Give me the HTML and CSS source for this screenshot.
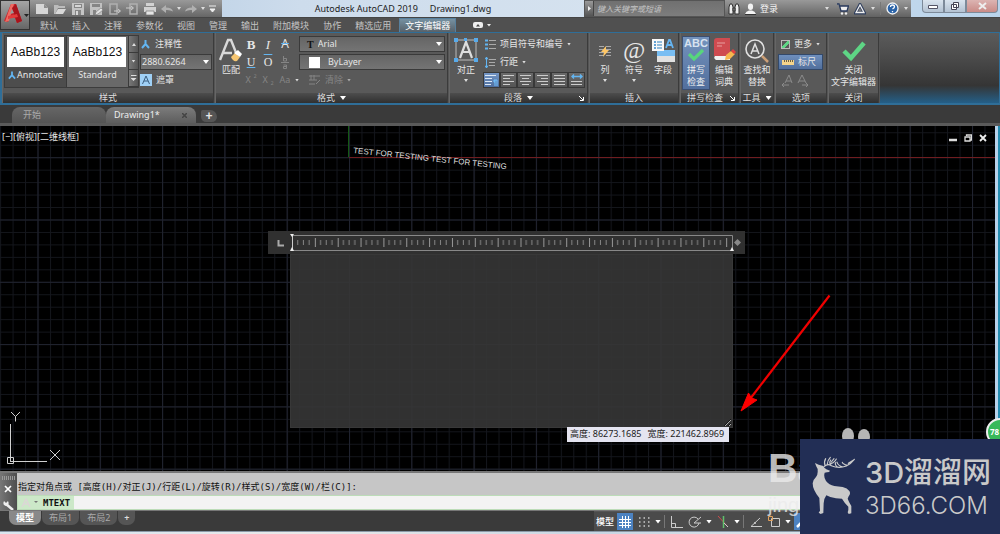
FILE: index.html
```html
<!DOCTYPE html>
<html lang="zh-CN">
<head>
<meta charset="utf-8">
<meta name="viewport" content="width=device-width, initial-scale=1">
<title>Autodesk AutoCAD 2019 - Drawing1.dwg</title>
<link rel="stylesheet" href="styles.css">
</head>
<body>
<div class="app">
  <button class="app-menu" aria-label="应用程序菜单">
    <svg width="30" height="30" viewBox="0 0 30 30"><path d="M3 20L10 3h5l6 17-5 2-2-5-5-1-2 5z" fill="#c9252c"/><path d="M10 3h3L8 20l-4 1z" fill="#ef6b62"/><path d="M15 3l6 17-5 2-5-15z" fill="#a8141c"/><path d="M7 15l9-2 1 3-10 2z" fill="#e23c3c"/><path d="M11 8l-2 5 4-1z" fill="#9a9a9a"/><path d="M23 13h5l-2.500 3z" fill="#222"/></svg>
  </button>

  <header class="titlebar">
    <div class="quick">
      <button aria-label="新建"><svg width="14" height="12" viewBox="0 0 14 12"><path d="M1 1h8l4 4v6H1z" fill="#d6d6d6"/><path d="M9 1v4h4" fill="#8d8d8d"/></svg></button>
      <button aria-label="打开"><svg width="14" height="12" viewBox="0 0 14 12"><path d="M1 11V2h4l1 1h6v2H5l-3 6z" fill="#bcbcbc"/><path d="M5 6h8l-3 5H2z" fill="#d8d8d8"/></svg></button>
      <button aria-label="保存"><svg width="14" height="12" viewBox="0 0 14 12"><path d="M1 0h12v12H1z" fill="#c4c4c4"/><path d="M3 1h8v4H3zM4 7h6v5H4z" fill="#858585"/><path d="M4 2h6v2H4zM5 8h2v4H5z" fill="#d6d6d6"/></svg></button>
      <button aria-label="另存为"><svg width="14" height="12" viewBox="0 0 14 12"><path d="M1 0h12v12H1z" fill="#c0c0c0"/><path d="M3 1h8v3H3zM4 7h3v5H4z" fill="#858585"/><path d="M6 12l1-3 5-4 2 2-5 4z" fill="#e2e2e2" stroke="#777" stroke-width=".6"/></svg></button>
      <button aria-label="从移动设备打开"><svg width="14" height="12" viewBox="0 0 14 12"><path d="M3 1h7v10H3z" fill="none" stroke="#b0b0b0" stroke-width="1.500"/><path d="M7 8h6M11 6l2.500 2L11 10" stroke="#ccc" fill="none"/></svg></button>
      <button aria-label="保存到移动设备"><svg width="14" height="12" viewBox="0 0 14 12"><path d="M5 1h7v10H5z" fill="none" stroke="#b0b0b0" stroke-width="1.500"/><path d="M1 5h7M6 3l2.500 2L6 7" stroke="#ccc" fill="none"/></svg></button>
      <button aria-label="打印"><svg width="14" height="12" viewBox="0 0 14 12"><path d="M3 0h8v3H3zM1 4h12v5H1z" fill="#d2d2d2"/><path d="M3 8h8v4H3z" fill="#e4e4e4" stroke="#777" stroke-width=".7"/></svg></button>
      <button aria-label="放弃"><svg width="12" height="10" viewBox="0 0 12 10"><path d="M0 5l5-4v2.500q6 0 7 4q-3-2-7-1.500V9z" fill="#b0b0b0"/></svg></button>
      <i class="caret"></i>
      <button aria-label="重做"><svg width="12" height="10" viewBox="0 0 12 10"><path d="M12 5L7 1v2.500q-6 0-7 4q3-2 7-1.500V9z" fill="#b0b0b0"/></svg></button>
      <i class="caret"></i>
      <button aria-label="自定义快速访问工具栏"><svg width="7" height="8" viewBox="0 0 7 8"><path d="M0 1h7M1 4h5L3.500 7z" stroke="#eee" fill="#eee"/></svg></button>
    </div>
    <h1 class="title"><span>Autodesk AutoCAD 2019</span><span>Drawing1.dwg</span></h1>
    <div class="search"><button class="play" aria-label="展开搜索"></button><input type="text" aria-label="搜索" placeholder="键入关键字或短语"></div>
    <div class="account">
      <button aria-label="查找"><svg width="12" height="12" viewBox="0 0 12 12"><path d="M1 4l1-3h2l1 3v7H1zM7 4l1-3h2l1 3v7H7zM5 5h2v3H5z" fill="#eee" stroke="#333"/></svg></button>
      <button class="login"><svg width="11" height="12" viewBox="0 0 11 12"><ellipse cx="5.500" cy="3.700" rx="2.600" ry="3.200" fill="#f3f3f3"/><path d="M0 11q1-3 4-3.500h3q3 .5 4 3.500z" fill="#f3f3f3"/><path d="M0 11.500h11" stroke="#333"/></svg>登录</button>
      <i class="caret push"></i>
      <button class="cart" aria-label="应用商店"><svg width="12" height="12" viewBox="0 0 12 12"><path d="M0 1h2l2 7h6l1.500-5H3" fill="#eee" stroke="#28395c" stroke-width="1.300"/><circle cx="5" cy="10.500" r="1.200" fill="#eee"/><circle cx="9" cy="10.500" r="1.200" fill="#eee"/></svg></button>
      <button aria-label="连接"><svg width="12" height="12" viewBox="0 0 12 12"><path d="M6 1.500L1.500 10h9z" fill="none" stroke="#2c3c5c" stroke-width="3"/><path d="M6 2L2 9.500h8z" fill="none" stroke="#eee" stroke-width="1.300"/></svg></button>
      <i class="caret"></i><i class="rule"></i>
      <button aria-label="帮助"><svg width="13" height="13" viewBox="0 0 13 13"><circle cx="6.500" cy="6.500" r="5.500" fill="#2a63a8" stroke="#f3f3f3" stroke-width="1.300"/><path d="M4.500 5q0-2 2-2t2 1.800q0 1-2 2.200M6.500 9v1.200" stroke="#fff" stroke-width="1.300" fill="none"/></svg></button>
      <i class="caret"></i>
    </div>
    <div class="window">
      <button aria-label="最小化"><svg width="10" height="8" viewBox="0 0 10 8"><path d="M.5 3.500h9v3h-9z" fill="#fff" stroke="#556"/></svg></button>
      <button aria-label="还原"><svg width="10" height="10" viewBox="0 0 10 10"><path d="M3.500 1.500h5v5h-5zM1.500 3.500h5v5h-5z" fill="#fff" stroke="#445"/></svg></button>
      <button class="close" aria-label="关闭"><svg width="9" height="8" viewBox="0 0 9 8"><path d="M1 1l7 6M8 1L1 7" stroke="#eee" stroke-width="2"/></svg></button>
    </div>
  </header>

  <nav class="menus">
    <a href="#">默认</a><a href="#">插入</a><a href="#">注释</a><a href="#">参数化</a><a href="#">视图</a><a href="#">管理</a><a href="#">输出</a><a href="#">附加模块</a><a href="#">协作</a><a href="#">精选应用</a><a href="#" class="active">文字编辑器</a>
    <button aria-label="最小化功能区"><svg width="19" height="6" viewBox="0 0 19 6"><rect width="10" height="6" rx="2" fill="#eee"/><path d="M3 4.500L5 2l2 2.500z" fill="#444"/><path d="M14 2h4l-2 2.500z" fill="#eee"/></svg></button>
  </nav>

  <section class="ribbon">
    <section class="panel style-panel">
      <div class="body">
        <div class="gallery">
          <button class="card"><b>AaBb123</b><span><svg width="8" height="9" viewBox="0 0 9 9"><path d="M4.500 0v4M4.500 4L1 8M4.500 4L8 8" stroke="#63b5f1" stroke-width="2"/></svg>Annotative</span></button>
          <button class="card on"><b>AaBb123</b><span>Standard</span></button>
          <div class="scroller"><button aria-label="上一行"><i class="caret up"></i></button><button aria-label="下一行"><i class="caret"></i></button><button aria-label="更多样式"><i class="caret bar"></i></button></div>
        </div>
        <div class="stack">
          <button class="row"><svg width="11" height="9" viewBox="0 0 11 9"><path d="M5.500 0v4M5.500 4L2 8M5.500 4L9 8" stroke="#63b5f1" stroke-width="2"/></svg>注释性</button>
          <span class="combo short"><select aria-label="文字高度"><option>2880.6264</option></select><i class="caret big"></i></span>
          <button class="row"><svg width="12" height="12" viewBox="0 0 12 12"><rect width="12" height="12" fill="#9fd0f6"/><path d="M2.500 10L6 2l3.500 8M4 7h4" stroke="#3c5f80" fill="none"/></svg>遮罩</button>
        </div>
      </div>
      <h2>样式</h2>
    </section>

    <section class="panel">
      <div class="body tight">
        <button class="tool narrow"><svg width="24" height="26" viewBox="0 0 24 26"><path d="M1 22L9 2h3l6 15M4 15h9" fill="none" stroke="#d9d9d9" stroke-width="2.400"/><path d="M12 19l4-4 5 4-3 4q-4 1-6-4z" fill="#f5c571"/><path d="M15 15l4-3 4 4-2 3z" fill="#fff"/></svg><span>匹配</span></button>
        <div class="stack">
          <div class="glyphs"><button class="serif bold">B</button><button class="serif ital">I</button><button class="strike">A</button></div>
          <div class="glyphs"><button class="serif under">U</button><button class="serif over">O</button><button class="off" aria-label="堆叠"><svg width="8" height="13" viewBox="0 0 8 13"><path d="M0 6.500h8M2.500 0v5h3V2.500h-3M2.500 9h3v3.500h-3v-2h3" stroke="#858585" fill="none"/></svg></button></div>
          <div class="glyphs"><button class="off">X<sup>2</sup></button><button class="off">X<sub>2</sub></button><button class="off">Aa</button><i class="caret"></i></div>
        </div>
        <div class="stack">
          <span class="combo"><b class="tt">T</b><select aria-label="字体"><option>Arial</option></select><i class="caret big"></i></span>
          <span class="combo"><i class="swatch"></i><select class="inset" aria-label="颜色"><option>ByLayer</option></select><i class="caret big"></i></span>
          <button class="row off clear"><svg width="12" height="10" viewBox="0 0 12 10"><path d="M0 1h11M2 0v5M5 0v5M0 5h8M0 9h6M7 9l4-4" stroke="#858585" fill="none"/></svg>清除<i class="caret"></i></button>
        </div>
      </div>
      <h2>格式<i class="caret big"></i></h2>
    </section>

    <section class="panel">
      <div class="body">
        <button class="tool"><svg width="24" height="26" viewBox="0 0 24 26"><path d="M2 2h20v20H2z" fill="none" stroke="#bbb"/><path d="M6 20l6-16 6 16M8 14h8" fill="none" stroke="#ddd" stroke-width="2.200"/><path d="M0 0h4v4H0zM20 0h4v4h-4zM0 20h4v4H0zM20 20h4v4h-4zM10 0h3v3h-3z" fill="#58aaea"/></svg><span>对正</span><i class="caret"></i></button>
        <div class="stack para">
          <button class="row"><svg width="11" height="11" viewBox="0 0 11 11"><path d="M0 1.500h3M0 5.500h3M0 9.500h3" stroke="#63b5f1" stroke-width="2"/><path d="M4 1.500h7M4 5.500h7M4 9.500h7" stroke="#aaa"/></svg>项目符号和编号<i class="caret"></i></button>
          <button class="row"><svg width="11" height="11" viewBox="0 0 11 11"><path d="M1.500 0v11M0 2.500L1.500 0 3 2.500M0 8.500L1.500 11 3 8.500" stroke="#63b5f1" fill="none"/><path d="M4 2.500h7M4 5.500h6M4 8.500h6" stroke="#aaa"/></svg>行距<i class="caret"></i></button>
          <div class="aligns">
            <button class="on" aria-label="默认"><svg width="13" height="12" viewBox="0 0 13 12"><path d="M0 1.500h11M0 4.500h7M0 7.500h7M0 10.500h6" stroke="#dce8f5"/><path d="M10 6v6M12 6v6M12 6H9v2h1" stroke="#72c4ff" fill="none"/></svg></button>
            <button aria-label="左对齐"><svg width="11" height="12" viewBox="0 0 11 12"><path d="M0 1.500h11M0 4.500h7M0 7.500h11M0 10.500h7" stroke="#ccc"/></svg></button>
            <button aria-label="居中"><svg width="11" height="12" viewBox="0 0 11 12"><path d="M0 1.500h11M2 4.500h7M0 7.500h11M2 10.500h7" stroke="#ccc"/></svg></button>
            <button aria-label="右对齐"><svg width="11" height="12" viewBox="0 0 11 12"><path d="M0 1.500h11M4 4.500h7M0 7.500h11M4 10.500h7" stroke="#ccc"/></svg></button>
            <button aria-label="对正"><svg width="11" height="12" viewBox="0 0 11 12"><path d="M0 1.500h11M0 4.500h11M0 7.500h11M0 10.500h11" stroke="#ccc"/></svg></button>
            <button aria-label="分布"><svg width="12" height="12" viewBox="0 0 12 12"><path d="M1 2.500h10M3 .5L1 2.500l2 2M9 .5l2 2-2 2" stroke="#63b5f1" stroke-width="1.400" fill="none"/><path d="M0 7.500h11M0 10.500h11" stroke="#ccc"/></svg></button>
          </div>
        </div>
      </div>
      <h2>段落<i class="caret big"></i><svg class="launch" width="5" height="5" viewBox="0 0 5 5"><path d="M0 0l4 4M4.500 1v3.500H1" stroke="#fff" fill="none"/></svg></h2>
    </section>

    <section class="panel">
      <div class="body insert">
        <button class="tool"><svg width="14" height="26" viewBox="0 0 14 26"><path d="M1 8.500h5M1 11.500h5M1 14.500h5M1 17.500h5M8 8.500h5M8 11.500h5M8 14.500h5M8 17.500h5" stroke="#aaa"/><path d="M8 8l-5 6h3l-1 5 6-7H8z" fill="#ffc766"/></svg><span>列</span><i class="caret"></i></button>
        <button class="tool"><span class="at">@</span><span>符号</span><i class="caret"></i></button>
        <button class="tool"><svg width="25" height="26" viewBox="0 0 25 26"><path d="M6 12h18v12H6z" fill="#e1e1e1"/><path d="M6 12h18v6H6z" fill="#79bef3"/><path d="M1 1h12v12H1z" fill="#f8f8f8"/><path d="M3 4h2M3 7h2M3 10h2" stroke="#3285c8" stroke-width="1.500"/><path d="M6 4h5M6 7h5M6 10h5" stroke="#2c80bf"/><path d="M15 10l3-8h1l3 8M16 7h5" stroke="#65b4f1" stroke-width="1.800" fill="none"/></svg><span>字段</span></button>
      </div>
      <h2>插入</h2>
    </section>

    <section class="panel">
      <div class="body spell">
        <button class="tool on"><strong>ABC</strong><svg width="18" height="13" viewBox="0 0 18 13"><path d="M2 5l5 5 9-9" fill="none" stroke="#57d67c" stroke-width="3.200"/></svg><span>拼写<br>检查</span></button>
        <button class="tool narrow"><svg width="24" height="26" viewBox="0 0 24 26"><path d="M2 3q0-3 3-3h13v18H2z" fill="#cf4b50"/><path d="M5 5h8M5 8h5" stroke="#e8a0a0"/><path d="M3 18h15v4H4q-3-2-1-4z" fill="#f2f2f2"/><path d="M13 22l1-5 5-4 4 3-5 5z" fill="#f6b64e"/><path d="M19 13l2-2 3 3-2 2z" fill="#e34040"/></svg><span>编辑<br>词典</span></button>
      </div>
      <h2 class="launches">拼写检查<svg class="launch" width="5" height="5" viewBox="0 0 5 5"><path d="M0 0l4 4M4.500 1v3.500H1" stroke="#fff" fill="none"/></svg></h2>
    </section>

    <section class="panel">
      <div class="body">
        <button class="tool"><svg width="26" height="26" viewBox="0 0 26 26"><circle cx="11" cy="11" r="9" fill="none" stroke="#e0e0e0" stroke-width="1.600"/><path d="M7 16l4-10 4 10M8 13h6" fill="none" stroke="#e0e0e0" stroke-width="1.500"/><path d="M18 18l6 6" stroke="#cda077" stroke-width="2.500"/></svg><span>查找和<br>替换</span></button>
      </div>
      <h2>工具<i class="caret big"></i></h2>
    </section>

    <section class="panel">
      <div class="body">
        <div class="stack options">
          <label class="row"><input type="checkbox" checked>更多<i class="caret"></i></label>
          <button class="row ruler-toggle"><svg width="12" height="7" viewBox="0 0 12 7"><path d="M0 1h12v5H0z" fill="#f4d48b"/><path d="M2.500 1v2M4.500 1v2M6.500 1v2M8.500 1v2M10.500 1v2" stroke="#6b6145"/></svg>标尺</button>
          <button class="row off" aria-label="放弃和重做"><svg width="29" height="13" viewBox="0 0 29 13"><path d="M4 9l4-8 3 8M5 7h5M17 9l4-8 4 8M18 7h6M8 11H1M3 9l-2 2 2 2M21 11h6M25 9l2 2-2 2" stroke="#8b8b8b" fill="none"/></svg></button>
        </div>
      </div>
      <h2>选项</h2>
    </section>

    <section class="panel">
      <div class="body">
        <button class="tool"><svg width="24" height="26" viewBox="0 0 24 26"><path d="M2 13l7 7L22 5" fill="none" stroke="#5ed585" stroke-width="4.500"/></svg><span>关闭<br>文字编辑器</span></button>
      </div>
      <h2>关闭</h2>
    </section>
    <div class="filler"></div>
  </section>

  <nav class="files">
    <a href="#" class="file">开始</a>
    <a href="#" class="file current">Drawing1*<svg width="5" height="5" viewBox="0 0 5 5"><path d="M0 0l5 5M5 0L0 5" stroke="#444" stroke-width="1.500"/></svg></a>
    <button class="plus" aria-label="新图形">+</button>
  </nav>

  <main class="canvas">
    <svg class="drawing" width="100%" height="100%">
      <defs>
        <pattern id="minor" x="349" y="31.200" width="12.460" height="12.460" patternUnits="userSpaceOnUse"><path d="M0 .5h12.460M.5 0v12.460" stroke="#14161c"/></pattern>
        <pattern id="major" x="349" y="31.200" width="62.300" height="62.300" patternUnits="userSpaceOnUse"><path d="M0 .5h62.300M.5 0v62.300" stroke="#20232f"/></pattern>
      </defs>
      <rect width="100%" height="100%" fill="url(#minor)"/>
      <rect width="100%" height="100%" fill="url(#major)"/>
      <path d="M349 31.500H1000" stroke="#701d20"/><path d="M348.500 0v31" stroke="#145a14"/>
      <g stroke="#d0d0d0" fill="none"><path d="M10.500 298v38M10 335.500h37M7.500 331.500h6v6h-6zM11 286l4.500 4.500v5M20 286l-4.500 4.500M50 324l10 10M60 324l-10 10"/></g>
      <text x="353" y="27" transform="rotate(6 353 27)" class="model-text">TEST FOR TESTING TEST FOR TESTING</text>
    </svg>
    <span class="view-label">[−][俯视][二维线框]</span>
    <div class="view-controls"><button aria-label="最小化"><svg width="8" height="8" viewBox="0 0 8 8"><path d="M0 6h8" stroke="#ddd" stroke-width="2.500"/></svg></button><button aria-label="还原"><svg width="8" height="8" viewBox="0 0 8 8"><path d="M2.500 2V1h5v5H6M1 3h5v4H1z" stroke="#ddd" stroke-width="1.300" fill="none"/></svg></button><button aria-label="关闭"><svg width="8" height="8" viewBox="0 0 8 8"><path d="M1 1l6 6M7 1L1 7" stroke="#eee" stroke-width="1.800"/></svg></button></div>
    <div class="editor">
      <svg class="ruler" width="477" height="23" viewBox="0 0 477 23">
        <defs><pattern id="ticks" x="24" y="0" width="22.850" height="23" patternUnits="userSpaceOnUse"><path d="M.5 7v9" stroke="#999"/><path d="M5.700 9v5M11.400 9v5M17.100 9v5" stroke="#858585"/></pattern></defs>
        <rect width="477" height="23" fill="#303030"/>
        <path d="M10.500 9v5.500h5.500" stroke="#aaa" stroke-width="2" fill="none"/>
        <rect x="26" y="0" width="437" height="23" fill="url(#ticks)"/>
        <path d="M24 4.500h440.500V20M24 19.500h440.500" stroke="#888" fill="none"/><path d="M24.500 5v14" stroke="#ccc"/>
        <path d="M22 3h4l-2 3zM22 20h4l-2-4zM462 20h4l-2-4z" fill="#eee"/><path d="M469.500 8l3.500 3.500-3.500 3.500-3.500-3.500z" fill="#888"/>
      </svg>
      <textarea class="mtext" aria-label="多行文字"></textarea>
    </div>
    <output class="size"><span>高度: 86273.1685</span><span>宽度: 221462.8969</span></output>
    <svg class="arrow" width="92" height="120" viewBox="0 0 92 120"><path d="M89.500 1.500L10 105" stroke="#f00000" stroke-width="2.200"/><path d="M1 117L8.500 99l3 5 5.500 2z" fill="#f00" stroke="#f00"/></svg>
    <div class="edge"></div>
  </main>

  <section class="command">
    <div class="grip"><svg width="17" height="38" viewBox="0 0 17 38"><path d="M2 5h13" stroke="#999" stroke-width="4" stroke-dasharray="1 1"/><path d="M5 13l6 6M11 13l-6 6" stroke="#fff" stroke-width="1.700"/><path d="M6 31l7 6" stroke="#eee" stroke-width="2.600"/><path d="M4 28q-2 4 2 5 4-1 2-5l-2 2z" fill="#eee"/></svg></div>
    <div class="console">
      <p>指定对角点或 [高度(H)/对正(J)/行距(L)/旋转(R)/样式(S)/宽度(W)/栏(C)]:</p>
      <div class="prompt"><label for="cmd"><svg width="18" height="9" viewBox="0 0 18 9"><path d="M1 9l4-8 4 8M3 6h4" stroke="#dcd6d6" stroke-width="1.500" fill="none"/><path d="M13 3h4l-2 2z" fill="#777"/></svg>MTEXT</label><input id="cmd" type="text"></div>
    </div>
  </section>

  <footer class="status">
    <nav class="layouts"><a href="#" class="current">模型</a><a href="#">布局1</a><a href="#">布局2</a><button aria-label="新布局">+</button></nav>
    <div class="toggles">
      <button class="text">模型</button>
      <button class="on" aria-label="栅格"><svg width="14" height="14" viewBox="0 0 14 14"><path d="M4.500 1v12M7.500 1v12M10.500 1v12M1 4.500h12M1 7.500h12M1 10.500h12" stroke="#fff"/></svg></button>
      <button aria-label="捕捉模式"><svg width="14" height="14" viewBox="0 0 14 14"><path d="M2 3h11M2 7h11M2 11h11" stroke="#ccc" stroke-width="1.500" stroke-dasharray="1.500 3"/></svg></button><i class="caret big"></i><i class="rule"></i>
      <button aria-label="正交"><svg width="13" height="14" viewBox="0 0 13 14"><path d="M1.500 1v11.500H13M1.500 8.500h4v4" stroke="#ccc" fill="none"/></svg></button>
      <button aria-label="极轴追踪"><svg width="14" height="14" viewBox="0 0 14 14"><path d="M10 4a5 5 0 1 0 1 4M6 8h7M6 8l7-6" stroke="#ccc" fill="none"/></svg></button><i class="caret big"></i>
      <button aria-label="等轴测草图"><svg width="14" height="14" viewBox="0 0 14 14"><path d="M2 1l10 11" stroke="#d04b4b"/><path d="M7.500 1v12" stroke="#61c06c" stroke-width="1.500"/><path d="M8 8l4 4" stroke="#ccc"/></svg></button><i class="caret big"></i><i class="rule"></i>
      <button aria-label="对象捕捉追踪"><svg width="13" height="14" viewBox="0 0 13 14"><path d="M11 3L2 11.500h11" stroke="#ccc" fill="none"/><circle cx="6" cy="8" r="1" fill="#ccc"/></svg></button>
      <button aria-label="二维对象捕捉"><svg width="13" height="14" viewBox="0 0 13 14"><path d="M3.500 3.500h8v8h-8z" stroke="#ccc" fill="none"/><path d="M.5 1.500h4v4h-4z" stroke="#e2a15c" fill="none"/></svg></button><i class="caret big"></i>
      <button class="on" aria-label="注释可见性"><svg width="14" height="14" viewBox="0 0 14 14"><path d="M7 1v6l-5 5M7 7l5 5" stroke="#fff" stroke-width="2.500" fill="none"/></svg></button>
    </div>
  </footer>
  <div class="taskbar"></div>

  <aside class="baidu" aria-hidden="true">
    <svg width="32" height="16" viewBox="0 0 32 16"><ellipse cx="7" cy="8" rx="6" ry="8"/><ellipse cx="23" cy="9" rx="6" ry="8"/></svg>
    <b>Bai</b><span>jing</span>
  </aside>
  <aside class="badge">78</aside>
  <aside class="brand">
    <svg width="80" height="75" viewBox="0 0 240 225">
      <path d="M45 42L56 47 70 51Q72 57 79 61L90 65Q89 70 81 70L74 71Q70 84 78 96Q87 108 103 111L128 114Q142 117 148 126Q153 134 146 142L143 149Q147 160 154 171V193L146 195 143 190 145 183V173Q132 160 126 149Q107 149 91 144L79 139Q72 148 71 163L70 192 62 195 56 191 60 185 58 147Q38 123 38 103Q40 91 48 84Q54 76 53 65L53 60Q48 52 45 42Z" fill="#c9c9c9"/>
      <g fill="none" stroke="#c9c9c9" stroke-width="3.500" stroke-linecap="round"><path d="M73 52Q83 43 94 50Q116 60 139 51Q154 43 163 31M75 50Q71 39 77 29M82 45Q83 33 91 25M94 50Q86 42 92 33M94 39L102 29M91 44Q102 43 109 30M113 55Q103 47 107 41M127 54Q112 48 111 39M142 49Q128 45 127 40M145 43L161 33"/></g>
    </svg>
    <p><strong>3D溜溜网</strong><span>3D66.COM</span></p>
  </aside>
</div>
</body>
</html>
```

FILE: styles.css
```css
* { box-sizing: border-box; }
body { margin: 0; background: #3a3a3a; color: #e6e6e6; font: 9px/12px "Noto Sans", "Noto Sans CJK SC", sans-serif; }
button, input, select, textarea { margin: 0; padding: 0; border: 0; border-radius: 0; background: none; color: inherit; font: inherit; }
a { color: inherit; text-decoration: none; }
h1, h2, p { margin: 0; font-weight: 400; }
svg { display: block; flex: none; }
.app { position: relative; display: flex; flex-direction: column; min-height: 100vh; overflow: hidden; }
.caret { flex: none; width: 4px; height: 3px; background: #ddd; clip-path: polygon(0 0, 100% 0, 50% 100%); }
.caret.up { transform: rotate(180deg); }
.caret.big { width: 6px; height: 4px; background: #fff; }
.caret.bar { width: 6px; height: 6px; clip-path: polygon(0 0, 100% 0, 100% 1px, 0 1px, 0 3px, 100% 3px, 50% 100%, 0 3px); }
.rule { width: 1px; height: 13px; background: #777; }

.app-menu { position: absolute; z-index: 2; left: 0; top: 0; border: 1px solid #333; width: 30px; height: 30px; background: linear-gradient(#a5a5a5, #666); overflow: hidden; }

.titlebar { display: flex; height: 18px; border-bottom: 1px solid #454545; background: linear-gradient(90deg, #a9c4de, #cddcec 30%, #d5e2ef 60%, #b9d3ea); }
.quick { display: flex; flex: none; align-items: center; gap: 4px; width: 222px; padding: 0 3px 0 35px; background: linear-gradient(#999, #666); }
.title { display: flex; flex: 1; justify-content: center; align-items: center; gap: 12px; color: #222; font-size: 9px; white-space: nowrap; }
.search { display: flex; width: 141px; background: #777; border: 1px solid #555; }
.search input { flex: 1; min-width: 0; padding-left: 3px; background: linear-gradient(#707070, #7d7d7d); font-style: italic; font-size: 8px; }
.search input::placeholder { color: #c4c4c4; }
.play { width: 9px; background: linear-gradient(#999, #555); border-right: 1px solid #444; }
.play::before { content: ""; display: block; width: 3px; height: 5px; margin-left: 3px; background: #eee; clip-path: polygon(0 0, 100% 50%, 0 100%); }
.account { display: flex; align-items: center; gap: 5px; width: 186px; padding: 0 3px; background: linear-gradient(#999, #626262); }
.login { display: flex; align-items: center; gap: 4px; color: #f4f4f4; }
.push { margin-left: auto; }
.cart { margin-left: 3px; }
.window { display: flex; width: 89px; padding: 0 2px 4px 11px; }
.window button { display: grid; place-items: center; flex: 2; border: 1px solid #7d8a99; border-top: 0; background: linear-gradient(#dae4ee, #b3c2d2); }
.window .close { flex: 3; background: linear-gradient(#dcb4b2, #c98b87); }
.window button:first-child { border-radius: 0 0 0 4px; }
.window button:last-child { border-radius: 0 0 4px 0; }

.menus { display: flex; align-items: stretch; height: 14px; padding-left: 33px; background: #505050; line-height: 15px; white-space: nowrap; color: #c4c4c4; }
.menus a { padding: 0 7px; }
.menus a.active { padding: 0 5px; border: 1px solid #58809d; border-bottom: 0; background: linear-gradient(#7691a2, #58626a); color: #fff; line-height: 14px; margin-left: 1px; }
.menus button { margin-left: 17px; }

.ribbon { display: flex; gap: 1px; height: 73px; border: 1px solid #2f6e98; border-width: 1px 1px 2px 2px; background: #555; }
.panel { display: flex; flex-direction: column; flex: none; border-right: 1px solid #3b3b3b; border-left: 1px solid #666; }
.panel .body { display: flex; gap: 2px; height: 60px; padding: 3px 2px; background: #595959; }
.panel .body.tight { gap: 0; }
.panel .body.insert { gap: 1px; padding: 3px 1px; }
.panel .body.spell { gap: 1px; padding: 3px 1px; }
.panel h2 { position: relative; display: flex; flex: 1; align-items: center; justify-content: center; gap: 5px; background: linear-gradient(#4d4d4d, #303030); color: #ddd; font-size: 9px; line-height: 10px; }
.panel h2.launches { padding-right: 9px; }
.launch { position: absolute; right: 3px; bottom: 2px; }
.gallery { display: flex; height: 53px; border: 1px solid #3c3c3c; background: #4a4a4a; }
.card { display: flex; flex-direction: column; width: 62px; padding: 1px 2px; background: #4d4d4d; border-right: 1px solid #3a3a3a; }
.card b { width: 100%; background: #fff; color: #111; font: 12px/30px "Liberation Sans", sans-serif; }
.card span { display: flex; align-items: center; justify-content: center; gap: 1px; width: 100%; font-size: 9px; line-height: 16px; }
.card.on { background: #696969; }
.scroller { display: grid; grid-template-rows: 1fr 1fr 1fr; width: 9px; }
.scroller button { display: grid; place-items: center; border-bottom: 1px solid #3a3a3a; background: linear-gradient(90deg, #777, #555); }
.stack { display: flex; flex-direction: column; gap: 2px; }
.row { display: flex; align-items: center; gap: 4px; height: 16px; white-space: nowrap; }
.off { color: #858585; }
.off .caret { background: #aaa; }
.combo { display: flex; align-items: center; width: 146px; height: 16px; padding-right: 2px; border: 1px solid #3a3a3a; background: linear-gradient(#656565, #747474); }
.combo.short { width: 72px; }
.combo select { flex: 1; min-width: 0; height: 100%; padding: 0 1px; appearance: none; }
.combo select.inset { padding-left: 8px; }
.tt { margin-left: 7px; margin-right: 3px; color: #111; font: bold 10px "Liberation Serif", serif; }
.swatch { width: 11px; height: 11px; margin-left: 9px; background: #fff; }
.clear { padding-left: 10px; }
.panel.style-panel .body { gap: 1px; padding: 2px 1px; }
.style-panel .stack { padding-top: 1px; }
.tool { display: flex; flex-direction: column; align-items: center; min-width: 28px; padding-top: 2px; line-height: 12px; text-align: center; }
.tool.narrow { min-width: 26px; }
.tool .caret { margin-top: 3px; }
.tool.on { padding-top: 0; background: linear-gradient(#7493bd, #526f9d); border: 1px solid #3b4e70; color: #f1f1f1; }
.tool.on svg { margin-bottom: 2px; }
.tool strong { font: bold 11px/12px "Liberation Sans", sans-serif; color: #d8e2ef; }
.glyphs { display: flex; align-items: center; height: 16px; gap: 3px; }
.glyphs button { display: grid; grid-auto-flow: column; place-items: center; width: 14px; }
.glyphs sup, .glyphs sub { font-size: 5px; line-height: 5px; }
.glyphs sup { align-self: start; }
.glyphs sub { align-self: end; }
.serif { font: 12px/13px "Liberation Serif", serif; }
.serif.bold { font-weight: 700; font-size: 13px; }
.serif.ital { font-style: italic; font-size: 13px; }
.under { text-decoration: underline #63b5f1; }
.over { text-decoration: overline #63b5f1; }
.strike { font-size: 12px; text-decoration: line-through #63b5f1; }
.para { padding-left: 1px; }
.para .row { padding-left: 2px; }
.aligns { display: flex; }
.aligns button { display: grid; place-items: center; width: 17px; height: 16px; border: 1px solid #393939; background: linear-gradient(#6a6a6a, #555); }
.aligns .on { background: linear-gradient(#7395c5, #4f6f9f); }
.at { height: 26px; font: italic 24px/24px "Liberation Serif", serif; }
.options { padding-right: 1px; }
.options .row { padding: 0 3px; }
.options input { appearance: none; width: 9px; height: 9px; border: 1px solid #bbb; background: linear-gradient(135deg, transparent 40%, #5ed585 40% 65%, transparent 65%); }
.ruler-toggle { border: 1px solid #33496a; background: linear-gradient(#6e8fbd, #52709d); }
.filler { flex: 1; background: linear-gradient(#5b5b5b, #4b4b4b 35%, #353535 75%, #245f88); }

.files { display: flex; align-items: flex-end; height: 21px; padding-left: 12px; border-bottom: 3px solid #5a5a5a; background: #3a3a3a; }
.file { display: flex; align-items: center; justify-content: space-between; width: 94px; height: 16px; padding: 0 11px; border-radius: 8px 8px 0 0; background: linear-gradient(#666, #545454); color: #aaa; }
.file.current { width: 90px; padding: 0 9px 0 8px; background: linear-gradient(#7c7c7c, #5d5d5d); color: #eee; }
.plus { width: 16px; height: 12px; margin: 0 0 1px 5px; border-radius: 2px 8px 6px 6px; background: #555; font: bold 12px/12px "Liberation Sans", sans-serif; }

.canvas { position: relative; flex: 1; min-height: 345px; background: #000; overflow: hidden; }
.drawing { position: absolute; inset: 0; }
.model-text { fill: #ddd; font: 8px "Liberation Sans", sans-serif; }
.view-label { position: absolute; left: 2px; top: 5px; font-size: 9px; }
.view-controls { position: absolute; right: 13px; top: 8px; display: flex; gap: 7px; }
.editor { position: absolute; left: 268px; top: 105px; width: 477px; }
.mtext { display: block; width: 443px; height: 174px; margin-left: 22px; background: rgba(54, 54, 54, .9); border: 1px solid #383838; resize: both; }
.size { position: absolute; left: 567px; top: 301px; display: flex; gap: 6px; padding: 1px 5px 2px 3px; background: #e4e4f0; color: #222; white-space: nowrap; }
.arrow { position: absolute; left: 740px; top: 168px; }
.edge { position: absolute; right: 0; top: 0; bottom: 0; width: 5px; background: #b7d1ea; border-right: 2px solid #238bb0; }

.command { display: flex; height: 40px; border: 2px solid #777; border-width: 2px 0 1px; background: #c6c6c6; color: #111; }
.grip { width: 17px; background: linear-gradient(90deg, #777, #4d4d4d); overflow: hidden; }
.console { display: flex; flex: 1; flex-direction: column; font: 9px/12px "DejaVu Sans Mono", "Noto Sans CJK SC", monospace; }
.console p { flex: 1; padding: 8px 0 0 1px; }
.prompt { display: flex; height: 15px; border: 1px solid #bcdcb8; background: #f3f3f3; }
.prompt label { display: flex; align-items: center; gap: 4px; padding: 0 4px 0 3px; background: #cce8c8; font-weight: 700; }
.prompt input { flex: 1; }

.status { display: flex; justify-content: space-between; height: 20px; padding-left: 9px; background: #3a3a3a; }
.layouts { display: flex; gap: 1px; color: #aaa; line-height: 14px; }
.layouts a, .layouts button { height: 14px; padding: 0 7px; border-radius: 0 0 7px 7px; background: #555; }
.layouts button { padding: 0 6px; font-weight: 700; color: #ddd; }
.layouts .current { background: #898989; color: #fff; font-weight: 700; }
.toggles { display: flex; align-items: center; gap: 3px; width: 406px; padding-left: 2px; border-top: 1px solid #555; background: #4b4b4b; }
.toggles button { display: grid; place-items: center; height: 17px; min-width: 16px; }
.toggles .on { background: #4c82c1; }
.toggles .text { font-weight: 500; color: #fff; }
.taskbar { height: 3px; border-top: 1px solid #8b9aa8; background: linear-gradient(90deg, #dbe6ef 9%, #e9e9e9 30%, #c8d6e3 60%, #f0f0f0); }

.baidu { position: absolute; right: 132px; bottom: 16px; width: 100px; display: flex; flex-direction: column; color: rgba(235, 235, 235, .8); }
.baidu svg { margin-left: 73px; fill: #b5b5b5; }
.baidu b { font: bold 41px/48px "Liberation Sans", sans-serif; }
.baidu span { font: 20px/26px "Liberation Sans", sans-serif; }
.badge { position: absolute; right: -14px; top: 418px; width: 28px; height: 28px; padding-left: 2px; border: 2px solid #eee; border-radius: 50%; background: #39b95a; color: #fff; font-weight: 700; font-size: 8px; line-height: 24px; }
.brand { position: absolute; right: 0; bottom: 0; display: flex; align-items: center; width: 200px; height: 95px; background: #222e55; color: #c9c9c9; }
.brand svg { margin-right: -15px; margin-bottom: 1px; }
.brand p { display: flex; flex-direction: column; padding-top: 3px; white-space: nowrap; }
.brand strong { font: 500 29px/36px Inter, "Noto Sans CJK SC", sans-serif; }
.brand span { font: 300 24px/30px Inter, sans-serif; }
```
